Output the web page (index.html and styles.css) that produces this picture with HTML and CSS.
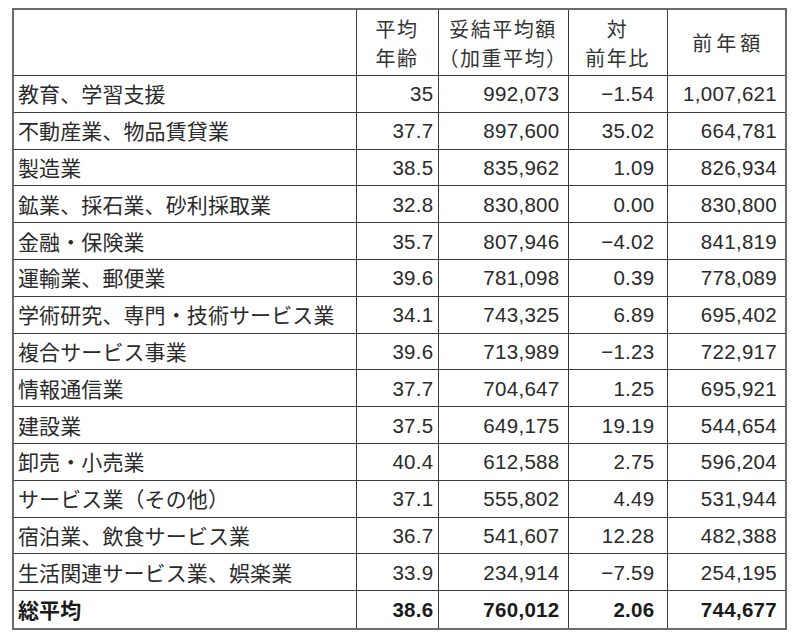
FILE: index.html
```html
<!DOCTYPE html>
<html lang="ja">
<head>
<meta charset="utf-8">
<link rel="stylesheet" href="styles.css">
</head>
<body>
<table class="tbl">
<colgroup>
<col class="c1"><col class="c2"><col class="c3"><col class="c4"><col class="c5">
</colgroup>
<thead>
<tr class="head">
<th></th>
<th>平均<br>年齢</th>
<th>妥結平均額<br>（加重平均）</th>
<th>対<br>前年比</th>
<th class="wide">前年額</th>
</tr>
</thead>
<tbody>
<tr><td class="name">教育、学習支援</td><td class="num n2">35</td><td class="num n3">992,073</td><td class="num n4">−1.54</td><td class="num n5">1,007,621</td></tr>
<tr><td class="name">不動産業、物品賃貸業</td><td class="num n2">37.7</td><td class="num n3">897,600</td><td class="num n4">35.02</td><td class="num n5">664,781</td></tr>
<tr><td class="name">製造業</td><td class="num n2">38.5</td><td class="num n3">835,962</td><td class="num n4">1.09</td><td class="num n5">826,934</td></tr>
<tr><td class="name">鉱業、採石業、砂利採取業</td><td class="num n2">32.8</td><td class="num n3">830,800</td><td class="num n4">0.00</td><td class="num n5">830,800</td></tr>
<tr><td class="name">金融・保険業</td><td class="num n2">35.7</td><td class="num n3">807,946</td><td class="num n4">−4.02</td><td class="num n5">841,819</td></tr>
<tr><td class="name">運輸業、郵便業</td><td class="num n2">39.6</td><td class="num n3">781,098</td><td class="num n4">0.39</td><td class="num n5">778,089</td></tr>
<tr><td class="name">学術研究、専門・技術サービス業</td><td class="num n2">34.1</td><td class="num n3">743,325</td><td class="num n4">6.89</td><td class="num n5">695,402</td></tr>
<tr><td class="name">複合サービス事業</td><td class="num n2">39.6</td><td class="num n3">713,989</td><td class="num n4">−1.23</td><td class="num n5">722,917</td></tr>
<tr><td class="name">情報通信業</td><td class="num n2">37.7</td><td class="num n3">704,647</td><td class="num n4">1.25</td><td class="num n5">695,921</td></tr>
<tr><td class="name">建設業</td><td class="num n2">37.5</td><td class="num n3">649,175</td><td class="num n4">19.19</td><td class="num n5">544,654</td></tr>
<tr><td class="name">卸売・小売業</td><td class="num n2">40.4</td><td class="num n3">612,588</td><td class="num n4">2.75</td><td class="num n5">596,204</td></tr>
<tr><td class="name">サービス業（その他）</td><td class="num n2">37.1</td><td class="num n3">555,802</td><td class="num n4">4.49</td><td class="num n5">531,944</td></tr>
<tr><td class="name">宿泊業、飲食サービス業</td><td class="num n2">36.7</td><td class="num n3">541,607</td><td class="num n4">12.28</td><td class="num n5">482,388</td></tr>
<tr><td class="name">生活関連サービス業、娯楽業</td><td class="num n2">33.9</td><td class="num n3">234,914</td><td class="num n4">−7.59</td><td class="num n5">254,195</td></tr>
<tr class="total"><td class="name">総平均</td><td class="num n2">38.6</td><td class="num n3">760,012</td><td class="num n4">2.06</td><td class="num n5">744,677</td></tr>
</tbody>
</table>
</body>
</html>
```
FILE: styles.css
```css
html, body {
  margin: 0;
  padding: 0;
  background: #ffffff;
}
body {
  padding: 8px 0 0 12px;
  font-family: "Noto Sans CJK JP", "Liberation Sans", sans-serif;
  color: #2a2a2a;
}
.tbl {
  border-collapse: collapse;
  table-layout: fixed;
  width: 773px;
  border: 2px solid #6a6a6a;
}
.c1 { width: 343px; }
.c2 { width: 82px; }
.c3 { width: 130px; }
.c4 { width: 99px; }
.c5 { width: 119px; }
.tbl th, .tbl td {
  border: 1.5px solid #3a3a3a;
  padding: 0;
  font-size: 21px;
  line-height: 27px;
  white-space: nowrap;
  overflow: hidden;
}
.head th {
  height: 65px;
  font-weight: normal;
  text-align: center;
  vertical-align: middle;
  color: #333;
  font-size: 20px;
  line-height: 29px;
  letter-spacing: 1.5px;
}
.head th.wide {
  letter-spacing: 4px;
  padding-left: 4px;
}
.tbl tbody tr {
  height: 36.8px;
}
.tbl tbody tr.total {
  height: 38px;
}
.name {
  text-align: left;
  padding-left: 4px !important;
  letter-spacing: 0.1px;
}
.num {
  text-align: right;
  font-family: "Liberation Sans", "Noto Sans CJK JP", sans-serif;
  font-size: 20.5px !important;
  letter-spacing: 0.3px;
}
.n2 { padding-right: 4px !important; }
.n3 { padding-right: 8px !important; }
.n4 { padding-right: 12px !important; }
.n5 { padding-right: 8px !important; }
.total td {
  font-weight: bold;
  color: #1a1a1a;
}
```
